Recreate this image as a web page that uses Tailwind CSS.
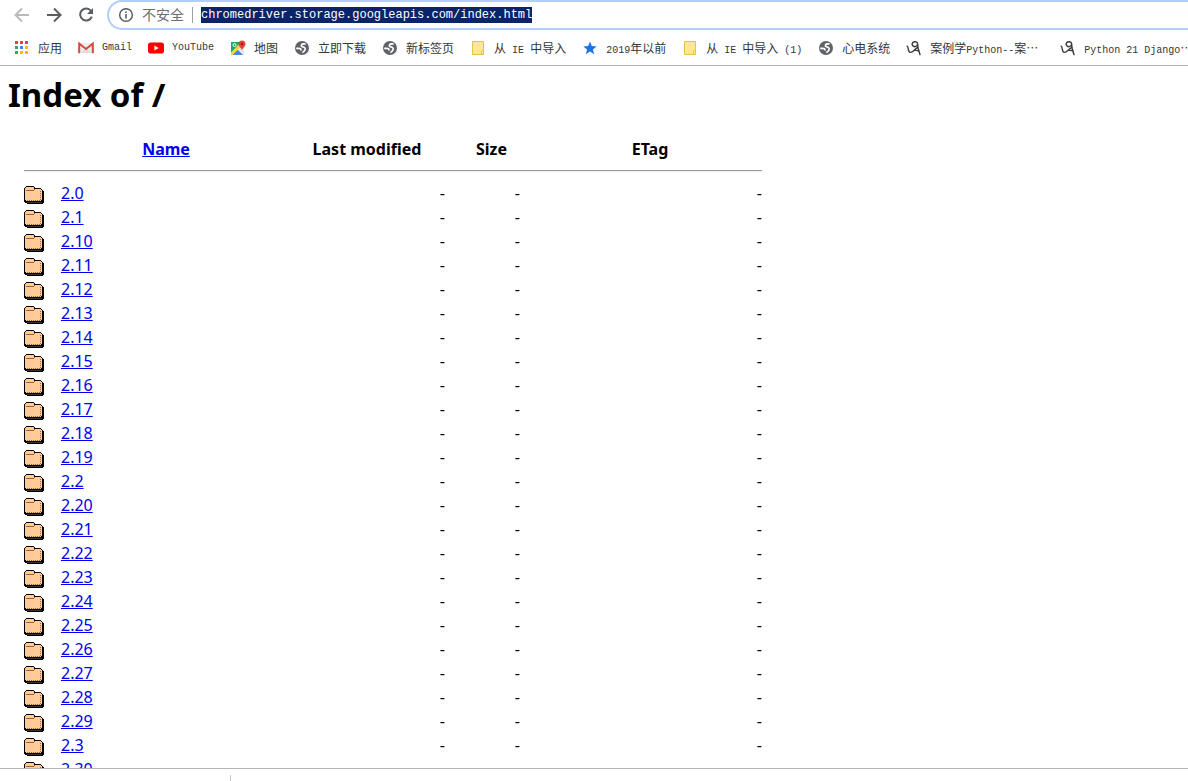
<!DOCTYPE html>
<html lang="zh-CN">
<head>
    <meta charset="UTF-8">
    <meta name="viewport" content="width=device-width, initial-scale=1">
    <title>Index of /</title>
    <script src="https://cdn.jsdelivr.net/npm/@tailwindcss/browser@4"></script>
</head>
<body class="flex flex-col h-screen overflow-hidden bg-white text-black font-['Noto_Sans','Noto_Sans_CJK_SC',sans-serif]">
    <!-- Shared icons -->
    <svg class="hidden">
        <symbol id="globe" viewBox="0 0 16 16">
            <circle cx="8" cy="8" r="7" fill="#5f6368"/>
            <path d="M11.600 3.900H9.600C7.400 3.900 6.800 5.600 8 6.500L10.400 7.400C12 8.400 11.200 11 8.400 12.600" fill="none" stroke="#fff" stroke-width="1.700"/>
            <path d="M2.200 8.300H4.800C6.400 8.300 7.200 9.200 6.800 10.600" fill="none" stroke="#fff" stroke-width="1.700"/>
        </symbol>
        <symbol id="bookmark-folder" viewBox="0 0 16 16">
            <path d="M2.500 1.500h11v13h-11z" fill="#ffe694" stroke="#e8c34b"/>
            <path d="M11.500 11.500q0-1 1-1t1 1v3h-2z" fill="#ffe694" stroke="#e8c34b"/>
        </symbol>
        <symbol id="course" viewBox="0 0 16 16">
            <g fill="none" stroke="#3c3c3c" stroke-linecap="round">
                <path d="M1.200 6.200C2.600 7 1.800 12 4.200 12.400 7 12.600 8.200 9.400 11.400 7.600" stroke-width="1.400"/>
                <path d="M11.600 4.200C11.600 2.600 10.400 1.600 9 1.700 7.200 1.800 6 3 6.200 4.600 6.600 6.600 9 7.200 10.600 6 11.400 5.400 11.600 4.800 11.600 4.200L12 8 14 14.600" stroke-width="1.500"/>
                <path d="M8.400 10.200 12.600 10.800" stroke-width="1.200"/>
            </g>
        </symbol>
        <symbol id="dir" viewBox="0 0 20 18" shape-rendering="crispEdges">
            <path d="M2 1h8v1h1v1h6v1h2v1h1v12h-1v1H3v-1H1v-1H0V2h2z" fill="#000"/>
            <path d="M3 16h15v1H3z" fill="#333"/>
            <path d="M2 0h8v1H2zM1 1h1v1H1zM10 1h1v1h-1z" fill="#000"/>
            <path d="M2 1h8v2h8v11h-1v1H2v-1H1V2h1z" fill="#fc9"/>
            <path d="M11 2h6v1h-6zM17 3h1v1h-1z" fill="#000"/>
            <path d="M2 4h8v1H2zM10 3h1v1h-1z" fill="#963"/>
            <path d="M16 5h1v1h-1zM16 7h1v1h-1zM16 9h1v1h-1zM16 11h1v1h-1zM16 13h1v1h-1z" fill="#963"/>
            <path d="M3 14h1v1H3zM5 14h1v1H5zM7 14h1v1H7zM9 14h1v1H9zM11 14h1v1h-1zM13 14h1v1h-1zM15 14h1v1h-1z" fill="#963"/>
        </symbol>
    </svg>

    <header class="shrink-0 border-b border-[#b4b4b4]">
        <!-- Toolbar -->
        <div class="flex items-center h-[30px] pl-3.5">
            <button type="button" aria-label="Back" class="mr-4">
                <svg class="w-4 h-4" viewBox="0 0 16 16" fill="none" stroke="#bababa" stroke-width="2"><path d="M15 8H2M8 1.500 1.500 8 8 14.500"/></svg>
            </button>
            <button type="button" aria-label="Forward" class="mr-4">
                <svg class="w-4 h-4" viewBox="0 0 16 16" fill="none" stroke="#5a5e62" stroke-width="2"><path d="M1 8h13M8 1.500 14.500 8 8 14.500"/></svg>
            </button>
            <button type="button" aria-label="Reload" class="mr-[13px]">
                <svg class="w-4 h-4" viewBox="0 0 16 16"><path d="M13 4A6 6 0 1 0 13.800 9.700" fill="none" stroke="#5a5e62" stroke-width="2"/><path d="M15 1v6H9z" fill="#5a5e62"/></svg>
            </button>
            <div class="flex items-center flex-1 h-full pl-[9px] border-2 border-r-0 border-[#b3cdfb] rounded-l-full">
                <svg class="w-4 h-4 mr-2" viewBox="0 0 16 16"><circle cx="8" cy="8" r="6.300" fill="none" stroke="#5a5e62" stroke-width="1.500"/><path d="M7.200 7h1.600v4.500H7.200zM7.200 4.400h1.600V6H7.200z" fill="#5a5e62"/></svg>
                <label for="url" class="text-[14px] leading-5 text-[#6b6e72]">不安全</label>
                <span class="w-px h-4 mx-2 bg-[#a0a0a0]"></span>
                <input id="url" type="text" value="chromedriver.storage.googleapis.com/index.html" class="field-sizing-content h-4 leading-4 text-[12px] text-white bg-[#0a246a] font-['Liberation_Mono',monospace] outline-none">
            </div>
        </div>

        <!-- Bookmarks bar -->
        <nav class="flex items-center gap-4 h-[35px] pl-3.5 overflow-hidden whitespace-nowrap text-[12px] leading-4 text-[#333639] font-['Noto_Sans_CJK_SC',sans-serif]">
            <a href="#" class="flex items-center gap-2 shrink-0">
                <svg class="w-4 h-4" viewBox="0 0 16 16" shape-rendering="crispEdges">
                    <path d="M1 1h3v3H1zM6 1h3v3H6zM11 1h3v3h-3z" fill="#ea4335"/>
                    <path d="M1 6h3v3H1zM1 11h3v3H1z" fill="#34a853"/><path d="M6 6h3v3H6z" fill="#4285f4"/>
                    <path d="M11 6h3v3h-3zM6 11h3v3H6zM11 11h3v3h-3z" fill="#fbbc05"/>
                </svg>
                <span>应用</span>
            </a>
            <a href="#" class="flex items-center gap-2 shrink-0">
                <svg class="w-4 h-4" viewBox="0 0 16 16"><path d="M1 3h14v10H1z" fill="#eee"/><path d="m3 13 5-5 5 5z" fill="#ddd"/><path d="M1.200 13.200V3.500L8 9l6.800-5.500v9.700" fill="none" stroke="#d9473d" stroke-width="2"/></svg>
                <span class="text-[10px] font-['Liberation_Mono',monospace]">Gmail</span>
            </a>
            <a href="#" class="flex items-center gap-2 shrink-0">
                <svg class="w-4 h-4" viewBox="0 0 16 16"><rect y="2.500" width="16" height="11" rx="2.800" fill="#f00"/><path d="m6.400 5.600 4.200 2.400-4.200 2.400z" fill="#fff"/></svg>
                <span class="text-[10px] font-['Liberation_Mono',monospace]">YouTube</span>
            </a>
            <a href="#" class="flex items-center gap-2 shrink-0">
                <svg class="w-4 h-4" viewBox="0 0 16 16">
                    <path d="M1 2h13v13H1z" fill="#e8e8e8"/><path d="M1 2h10L1 13z" fill="#1fa463"/><path d="m2.500 15 5-5.500 5.500 5.500z" fill="#4285f4"/>
                    <path d="M1 12.500 9.500 4l2 2L2.500 15H1z" fill="#fdd23c"/><circle cx="4.500" cy="5" r="1.500" fill="none" stroke="#fff"/>
                    <path d="M12 11c0-3-3.500-4-3.500-7a3.500 3.500 0 0 1 7 0c0 3-3.500 4-3.500 7z" fill="#e4453a"/><circle cx="12" cy="4" r="1.200" fill="#8c1f17"/>
                </svg>
                <span>地图</span>
            </a>
            <a href="#" class="flex items-center gap-2 shrink-0">
                <svg class="w-4 h-4"><use href="#globe"/></svg>
                <span>立即下载</span>
            </a>
            <a href="#" class="flex items-center gap-2 shrink-0">
                <svg class="w-4 h-4"><use href="#globe"/></svg>
                <span>新标签页</span>
            </a>
            <a href="#" class="flex items-center gap-2 shrink-0">
                <svg class="w-4 h-4"><use href="#bookmark-folder"/></svg>
                <span>从<span class="text-[10px] leading-none font-['Liberation_Mono',monospace]"> IE </span>中导入</span>
            </a>
            <a href="#" class="flex items-center gap-2 shrink-0">
                <svg class="w-4 h-4" viewBox="0 0 16 16"><path d="m8 1.500 1.800 4.600 4.900.3-3.800 3.100 1.300 4.800L8 11.600l-4.200 2.700 1.300-4.800L1.300 6.400l4.900-.3z" fill="#1a73e8"/></svg>
                <span><span class="text-[10px] leading-none font-['Liberation_Mono',monospace]">2019</span>年以前</span>
            </a>
            <a href="#" class="flex items-center gap-2 shrink-0">
                <svg class="w-4 h-4"><use href="#bookmark-folder"/></svg>
                <span>从<span class="text-[10px] leading-none font-['Liberation_Mono',monospace]"> IE </span>中导入<span class="text-[10px] leading-none font-['Liberation_Mono',monospace]"> (1)</span></span>
            </a>
            <a href="#" class="flex items-center gap-2 shrink-0">
                <svg class="w-4 h-4"><use href="#globe"/></svg>
                <span>心电系统</span>
            </a>
            <a href="#" class="flex items-center gap-2 shrink-0 min-w-[138px]">
                <svg class="w-4 h-4"><use href="#course"/></svg>
                <span>案例学<span class="text-[10px] leading-none font-['Liberation_Mono',monospace]">Python--</span>案…</span>
            </a>
            <a href="#" class="flex items-center gap-2 shrink-0">
                <svg class="w-4 h-4"><use href="#course"/></svg>
                <span><span class="text-[10px] leading-none font-['Liberation_Mono',monospace]">Python 21 Django</span>…</span>
            </a>
        </nav>
    </header>

    <!-- Directory listing -->
    <main class="flex-1 min-h-0 overflow-hidden">
        <h1 class="pt-[7px] pl-2 text-[33px] leading-11 font-bold">Index of /</h1>
        <table class="table-fixed w-[758px] mt-5 ml-3.5 border-separate border-spacing-x-0.5 border-spacing-y-0 text-[16px] leading-6">
            <colgroup>
                <col class="w-[35px]">
                <col class="w-[226px]">
                <col class="w-[172px]">
                <col class="w-[73px]">
                <col class="w-[240px]">
            </colgroup>
            <thead>
                <tr>
                    <th></th>
                    <th class="px-2"><a href="#" class="text-[#0000ee] underline">Name</a></th>
                    <th class="px-2">Last modified</th>
                    <th class="px-2">Size</th>
                    <th class="px-2">ETag</th>
                </tr>
                <tr>
                    <th colspan="5" class="px-2 py-[9px]"><hr class="h-0.5 border-t border-b border-t-[#9a9a9a] border-b-[#eeeeee]"></th>
                </tr>
            </thead>
            <tbody id="listing"></tbody>
        </table>
    </main>

    <footer class="shrink-0 h-[13px] pl-[230px] pt-1.5 border-t border-[#b4b4b4] bg-white">
        <div class="w-px h-full bg-[#c8c8c8]"></div>
    </footer>

    <script>
        const versions = ['2.0', '2.1', '2.10', '2.11', '2.12', '2.13', '2.14', '2.15', '2.16', '2.17', '2.18', '2.19',
            '2.2', '2.20', '2.21', '2.22', '2.23', '2.24', '2.25', '2.26', '2.27', '2.28', '2.29', '2.3', '2.30'];

        document.getElementById('listing').innerHTML = versions.map(v => `
            <tr>
                <td class="pl-2 pt-1"><svg class="block w-5 h-[18px]"><use href="#dir"/></svg></td>
                <td class="px-2"><a href="?path=${v}/" class="text-[#0000ee] underline">${v}</a></td>
                <td class="px-2 text-right">-</td>
                <td class="px-2 text-right">-</td>
                <td class="px-2 text-right">-</td>
            </tr>
        `).join('');
    </script>
</body>
</html>
